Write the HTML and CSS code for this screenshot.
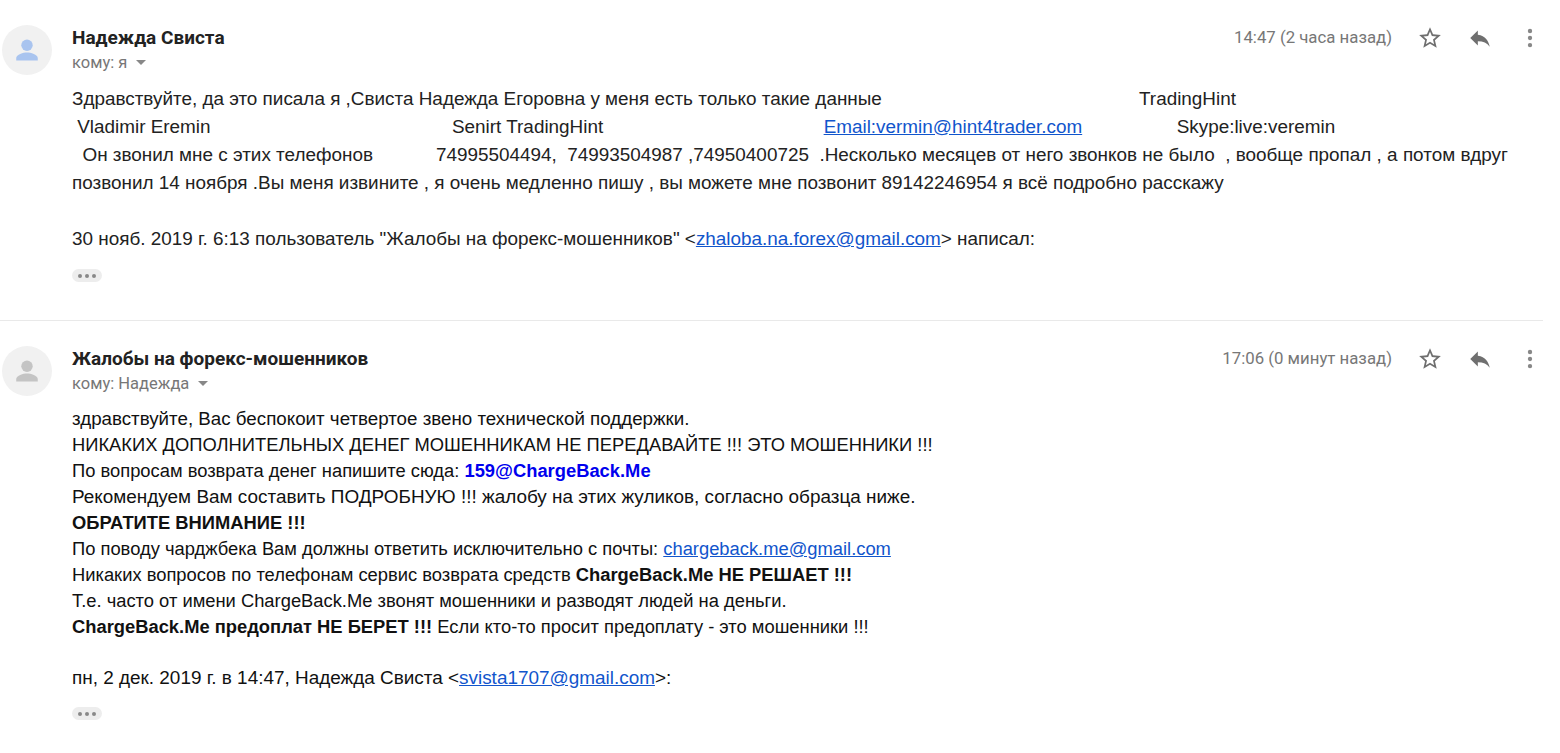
FILE: index.html
```html
<!DOCTYPE html>
<html lang="ru">
<head>
<meta charset="utf-8">
<title>Письмо</title>
<link rel="stylesheet" href="styles.css">
</head>
<body>
<main class="thread">
  <article class="msg msg-first">
    <header class="head">
      <div class="avatar">
        <svg viewBox="0 0 24 24" width="38" height="38"><circle cx="12" cy="9" r="3.6" fill="#a9c4ef"/><path d="M5.2 18.6v-1.5c0-2.3 4.5-3.5 6.8-3.5s6.800 1.200 6.800 3.500v1.500z" fill="#a9c4ef"/></svg>
      </div>
      <div class="who">
        <div class="name">Надежда Свиста</div>
        <div class="to">кому: я <span class="caret"></span></div>
      </div>
      <div class="meta">
        <span class="time">14:47 (2 часа назад)</span>
        <span class="icons">
          <svg class="ic" viewBox="0 0 24 24" width="26" height="26"><path d="M22 9.240l-7.190-.62L12 2 9.190 8.630 2 9.240l5.460 4.730L5.820 21 12 17.270 18.180 21l-1.630-7.030L22 9.240zM12 15.400l-3.760 2.270 1-4.280-3.320-2.880 4.380-.38L12 6.100l1.710 4.040 4.380.38-3.320 2.880 1 4.280L12 15.400z" fill="#6f6f6f"/></svg>
          <svg class="ic" viewBox="0 0 24 24" width="26" height="26"><path d="M10 9V5l-7 7 7 7v-4.100c5 0 8.500 1.600 11 5.100-1-5-4-10-11-11z" fill="#6f6f6f"/></svg>
          <svg class="ic" viewBox="0 0 24 24" width="26" height="26"><circle cx="12" cy="5.500" r="2" fill="#888"/><circle cx="12" cy="12" r="2" fill="#888"/><circle cx="12" cy="18.500" r="2" fill="#888"/></svg>
        </span>
      </div>
    </header>
    <div class="body body-a">
      <div class="ln">Здравствуйте, да это писала я ,Свиста Надежда Егоровна у меня есть только такие данные                                                 TradingHint</div>
      <div class="ln"> Vladimir Eremin                                              Senirt TradingHint                                          <a href="#">Email:vermin@hint4trader.com</a>                  Skype:live:veremin</div>
      <div class="ln">  Он звонил мне с этих телефонов            74995504494,  74993504987 ,74950400725  .Несколько месяцев от него звонков не было  , вообще пропал , а потом вдруг</div>
      <div class="ln">позвонил 14 ноября .Вы меня извините , я очень медленно пишу , вы можете мне позвонит 89142246954 я всё подробно расскажу</div>
      <div class="ln">&nbsp;</div>
      <div class="ln">30 нояб. 2019 г. 6:13 пользователь "Жалобы на форекс-мошенников" &lt;<a href="#">zhaloba.na.forex@gmail.com</a>&gt; написал:</div>
      <div class="dots"><i></i><i></i><i></i></div>
    </div>
  </article>
  <article class="msg msg-second">
    <header class="head">
      <div class="avatar">
        <svg viewBox="0 0 24 24" width="38" height="38"><circle cx="12" cy="9" r="3.6" fill="#c4c4c4"/><path d="M5.2 18.6v-1.5c0-2.3 4.5-3.5 6.8-3.5s6.800 1.200 6.800 3.500v1.500z" fill="#c4c4c4"/></svg>
      </div>
      <div class="who">
        <div class="name">Жалобы на форекс-мошенников</div>
        <div class="to">кому: Надежда <span class="caret"></span></div>
      </div>
      <div class="meta">
        <span class="time">17:06 (0 минут назад)</span>
        <span class="icons">
          <svg class="ic" viewBox="0 0 24 24" width="26" height="26"><path d="M22 9.240l-7.190-.62L12 2 9.190 8.630 2 9.240l5.460 4.730L5.820 21 12 17.270 18.180 21l-1.630-7.030L22 9.240zM12 15.400l-3.760 2.270 1-4.280-3.320-2.880 4.380-.38L12 6.100l1.710 4.040 4.380.38-3.320 2.880 1 4.280L12 15.400z" fill="#6f6f6f"/></svg>
          <svg class="ic" viewBox="0 0 24 24" width="26" height="26"><path d="M10 9V5l-7 7 7 7v-4.100c5 0 8.500 1.600 11 5.100-1-5-4-10-11-11z" fill="#6f6f6f"/></svg>
          <svg class="ic" viewBox="0 0 24 24" width="26" height="26"><circle cx="12" cy="5.500" r="2" fill="#888"/><circle cx="12" cy="12" r="2" fill="#888"/><circle cx="12" cy="18.500" r="2" fill="#888"/></svg>
        </span>
      </div>
    </header>
    <div class="body body-b">
      <div class="ln ln-md">здравствуйте, Вас беспокоит четвертое звено технической поддержки.</div>
      <div class="ln">НИКАКИХ ДОПОЛНИТЕЛЬНЫХ ДЕНЕГ МОШЕННИКАМ НЕ ПЕРЕДАВАЙТЕ !!! ЭТО МОШЕННИКИ !!!</div>
      <div class="ln">По вопросам возврата денег напишите сюда: <b class="blue">159@ChargeBack.Me</b></div>
      <div class="ln ln-lg">Рекомендуем Вам составить ПОДРОБНУЮ !!! жалобу на этих жуликов, согласно образца ниже.</div>
      <div class="ln"><b>ОБРАТИТЕ ВНИМАНИЕ !!!</b></div>
      <div class="ln">По поводу чарджбека Вам должны ответить исключительно с почты: <a href="#">chargeback.me@gmail.com</a></div>
      <div class="ln">Никаких вопросов по телефонам сервис возврата средств <b>ChargeBack.Me НЕ РЕШАЕТ !!!</b></div>
      <div class="ln">Т.е. часто от имени ChargeBack.Me звонят мошенники и разводят людей на деньги.</div>
      <div class="ln"><b>ChargeBack.Me предоплат НЕ БЕРЕТ !!!</b> Если кто-то просит предоплату - это мошенники !!!</div>
      <div class="ln ln-gap">&nbsp;</div>
      <div class="ln ln-lg">пн, 2 дек. 2019 г. в 14:47, Надежда Свиста &lt;<a href="#">svista1707@gmail.com</a>&gt;:</div>
      <div class="dots"><i></i><i></i><i></i></div>
    </div>
  </article>
</main>
</body>
</html>
```
FILE: styles.css
```css
html, body {
  margin: 0;
  padding: 0;
  background: #fff;
  overflow: hidden;
}
body {
  width: 1560px;
  height: 753px;
  font-family: "Liberation Sans", Arial, sans-serif;
  color: #222;
}
.thread {
  width: 1543px;
}
.msg-first {
  height: 321px;
  padding-top: 25px;
  box-sizing: border-box;
  border-bottom: 1px solid #e9e9e9;
}
.msg-second {
  padding-top: 25px;
}
.head {
  display: flex;
  align-items: flex-start;
  height: 50px;
}
.avatar {
  width: 50px;
  height: 50px;
  margin-left: 2px;
  border-radius: 50%;
  background: #f1f1f1;
  display: flex;
  align-items: center;
  justify-content: center;
  flex: none;
}
.who {
  margin-left: 20px;
  flex: 1;
}
.name {
  font-family: Roboto, sans-serif;
  font-weight: 700;
  font-size: 19px;
  line-height: 24px;
  margin-top: 1px;
  color: #222;
}
.to {
  font-family: Roboto, sans-serif;
  font-size: 16.500px;
  line-height: 24px;
  margin-top: 1px;
  color: #777;
}
.caret {
  display: inline-block;
  width: 0;
  height: 0;
  margin-left: 5px;
  vertical-align: 3px;
  border-left: 5px solid transparent;
  border-right: 5px solid transparent;
  border-top: 5px solid #888;
}
.meta {
  display: flex;
  align-items: center;
  height: 26px;
}
.time {
  font-family: Roboto, sans-serif;
  font-size: 16.800px;
  line-height: 24px;
  margin-top: -2px;
  color: #777;
}
.icons {
  display: flex;
  align-items: center;
  gap: 24px;
  margin-left: 25px;
}
.ic {
  display: block;
}
.body {
  margin-left: 72px;
}
.ln {
  white-space: pre;
}
.body-a {
  margin-top: 10px;
  font-size: 18.900px;
  line-height: 28px;
}
.body-b {
  margin-top: 10px;
  font-size: 18.350px;
  line-height: 26px;
  color: #111;
}
.ln-md {
  font-size: 18.760px;
}
.ln-lg {
  font-size: 18.930px;
}
.ln-gap {
  line-height: 25px;
}
.body a {
  color: #1155cc;
}
.blue {
  color: #0000ee;
}
.dots {
  display: flex;
  align-items: center;
  justify-content: center;
  gap: 3px;
  width: 30px;
  height: 13px;
  border-radius: 7px;
  background: #ededed;
}
.body-a .dots {
  margin-top: 16px;
}
.body-b .dots {
  margin-top: 16px;
}
.dots i {
  display: block;
  width: 4px;
  height: 4px;
  border-radius: 50%;
  background: #888;
}
```
